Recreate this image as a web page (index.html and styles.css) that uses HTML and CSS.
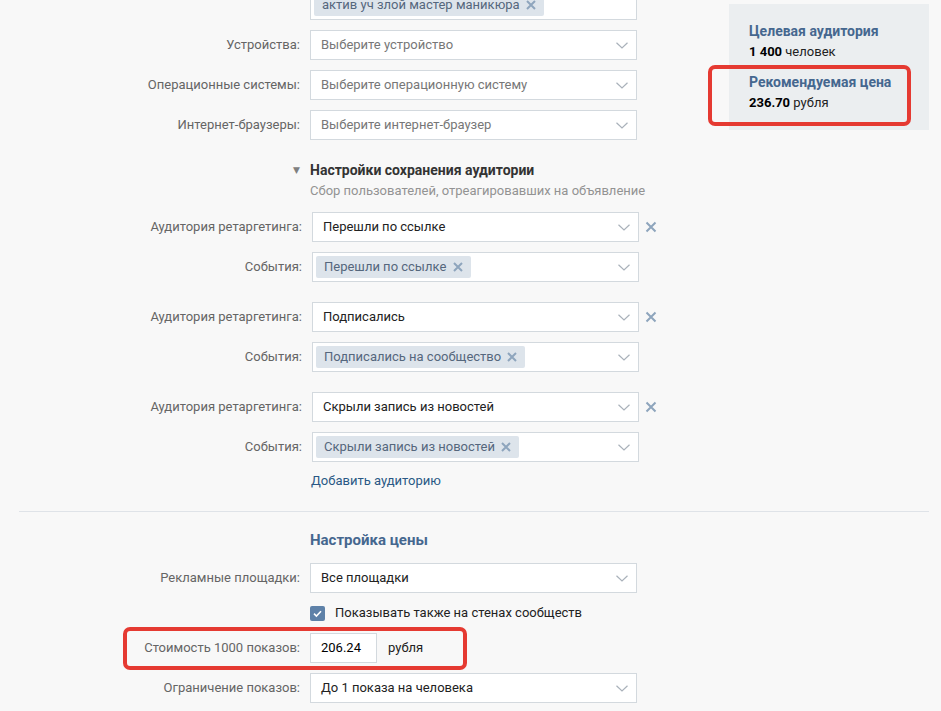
FILE: index.html
```html
<!DOCTYPE html>
<html lang="ru">
<head>
<meta charset="utf-8">
<title>Настройки</title>
<link rel="stylesheet" href="styles.css">
</head>
<body>
<div class="page">
  <div class="top">
    <div class="form">
      <div class="row">
        <div class="label"></div>
        <div class="select tags">
          <span class="tag">актив уч злой мастер маникюра <svg class="tag-x" viewBox="0 0 10 10"><path d="M1 1L9 9M9 1L1 9"/></svg></span>
        </div>
      </div>
      <div class="row">
        <div class="label">Устройства:</div>
        <div class="select"><span class="ph">Выберите устройство</span><svg class="chev" viewBox="0 0 12 7"><path d="M0.5 0.8L6 6L11.5 0.8"/></svg></div>
      </div>
      <div class="row">
        <div class="label">Операционные системы:</div>
        <div class="select"><span class="ph">Выберите операционную систему</span><svg class="chev" viewBox="0 0 12 7"><path d="M0.5 0.8L6 6L11.5 0.8"/></svg></div>
      </div>
      <div class="row">
        <div class="label">Интернет-браузеры:</div>
        <div class="select"><span class="ph">Выберите интернет-браузер</span><svg class="chev" viewBox="0 0 12 7"><path d="M0.5 0.8L6 6L11.5 0.8"/></svg></div>
      </div>

      <div class="sec-head"><span class="tri">▼</span>Настройки сохранения аудитории</div>
      <div class="sec-sub">Сбор пользователей, отреагировавших на объявление</div>

      <div class="group">
        <div class="row">
          <div class="label">Аудитория ретаргетинга:</div>
          <div class="select"><span class="val">Перешли по ссылке</span><svg class="chev" viewBox="0 0 12 7"><path d="M0.5 0.8L6 6L11.5 0.8"/></svg></div>
          <svg class="remove" viewBox="0 0 12 12"><path d="M1.5 1.5L10.5 10.5M10.5 1.5L1.5 10.5"/></svg>
        </div>
        <div class="row">
          <div class="label">События:</div>
          <div class="select tags"><span class="tag">Перешли по ссылке <svg class="tag-x" viewBox="0 0 10 10"><path d="M1 1L9 9M9 1L1 9"/></svg></span><svg class="chev" viewBox="0 0 12 7"><path d="M0.5 0.8L6 6L11.5 0.8"/></svg></div>
        </div>
      </div>

      <div class="group">
        <div class="row">
          <div class="label">Аудитория ретаргетинга:</div>
          <div class="select"><span class="val">Подписались</span><svg class="chev" viewBox="0 0 12 7"><path d="M0.5 0.8L6 6L11.5 0.8"/></svg></div>
          <svg class="remove" viewBox="0 0 12 12"><path d="M1.5 1.5L10.5 10.5M10.5 1.5L1.5 10.5"/></svg>
        </div>
        <div class="row">
          <div class="label">События:</div>
          <div class="select tags"><span class="tag">Подписались на сообщество <svg class="tag-x" viewBox="0 0 10 10"><path d="M1 1L9 9M9 1L1 9"/></svg></span><svg class="chev" viewBox="0 0 12 7"><path d="M0.5 0.8L6 6L11.5 0.8"/></svg></div>
        </div>
      </div>

      <div class="group last">
        <div class="row">
          <div class="label">Аудитория ретаргетинга:</div>
          <div class="select"><span class="val">Скрыли запись из новостей</span><svg class="chev" viewBox="0 0 12 7"><path d="M0.5 0.8L6 6L11.5 0.8"/></svg></div>
          <svg class="remove" viewBox="0 0 12 12"><path d="M1.5 1.5L10.5 10.5M10.5 1.5L1.5 10.5"/></svg>
        </div>
        <div class="row">
          <div class="label">События:</div>
          <div class="select tags"><span class="tag">Скрыли запись из новостей <svg class="tag-x" viewBox="0 0 10 10"><path d="M1 1L9 9M9 1L1 9"/></svg></span><svg class="chev" viewBox="0 0 12 7"><path d="M0.5 0.8L6 6L11.5 0.8"/></svg></div>
        </div>
      </div>

      <a class="add-link" href="#">Добавить аудиторию</a>
    </div>

    <div class="aside">
      <div class="stat">
        <div class="stat-title">Целевая аудитория</div>
        <div class="stat-val"><b>1 400</b> человек</div>
      </div>
      <div class="stat highlighted">
        <div class="stat-title">Рекомендуемая цена</div>
        <div class="stat-val"><b>236.70</b> рубля</div>
        <div class="mark mark-aside"></div>
      </div>
    </div>
  </div>

  <div class="divider"></div>

  <div class="price">
    <div class="price-title">Настройка цены</div>
    <div class="row">
      <div class="label">Рекламные площадки:</div>
      <div class="select"><span class="val">Все площадки</span><svg class="chev" viewBox="0 0 12 7"><path d="M0.5 0.8L6 6L11.5 0.8"/></svg></div>
    </div>
    <div class="row check-row">
      <span class="checkbox"><svg viewBox="0 0 15 15"><path d="M4 7.6L6.4 10L11 5.2"/></svg></span>
      <span class="check-text">Показывать также на стенах сообществ</span>
    </div>
    <div class="row cost-row">
      <div class="label">Стоимость 1000 показов:</div>
      <div class="input">206.24</div>
      <span class="unit">рубля</span>
      <div class="mark mark-cost"></div>
    </div>
    <div class="row">
      <div class="label">Ограничение показов:</div>
      <div class="select"><span class="val">До 1 показа на человека</span><svg class="chev" viewBox="0 0 12 7"><path d="M0.5 0.8L6 6L11.5 0.8"/></svg></div>
    </div>
  </div>
</div>
</body>
</html>
```
FILE: styles.css
```css
html, body {
  margin: 0;
  padding: 0;
}
body {
  background: #f8f8f8;
  font-family: Roboto, "Open Sans", "Liberation Sans", sans-serif;
  font-size: 13px;
  line-height: 18px;
  color: #222;
  overflow: hidden;
  height: 711px;
}
.page {
  margin-left: 19px;
  width: 910px;
}
.top {
  display: flex;
  justify-content: space-between;
  align-items: flex-start;
}
.form {
  margin-top: -10px;
  width: 660px;
}
.row {
  display: flex;
  align-items: center;
  margin-bottom: 10px;
  position: relative;
}
.label {
  width: 281px;
  margin-right: 10px;
  text-align: right;
  color: #656565;
  flex: none;
}
.select {
  width: 327px;
  height: 30px;
  box-sizing: border-box;
  border: 1px solid #d3d9de;
  background: #fff;
  display: flex;
  align-items: center;
  padding: 0 8px 0 10px;
  flex: none;
}
.select .ph {
  color: #777;
  flex: 1;
}
.select .val {
  color: #222;
  flex: 1;
}
.select.tags {
  padding-left: 3px;
}
.select.tags .tag {
  margin-right: auto;
}
.chev {
  width: 12px;
  height: 7px;
  flex: none;
  margin-left: auto;
}
.chev path {
  fill: none;
  stroke: #a9b1ba;
  stroke-width: 1.2;
}
.tag {
  display: inline-flex;
  align-items: center;
  height: 22px;
  padding: 0 8px;
  background: #dde4eb;
  border-radius: 2px;
  color: #55677d;
  white-space: pre;
}
.tag-x {
  width: 10px;
  height: 10px;
  margin-left: 3px;
}
.tag-x path, .remove path {
  fill: none;
  stroke: #8ea5bd;
  stroke-width: 2;
}
.remove {
  width: 12px;
  height: 12px;
  margin-left: 6px;
  flex: none;
}
.sec-head {
  display: flex;
  align-items: center;
  margin-top: 21px;
  margin-left: 274px;
  font-size: 14px;
  font-weight: bold;
  color: #333;
}
.tri {
  width: 17px;
  font-size: 9px;
  color: #7f7f7f;
  font-family: "DejaVu Sans", sans-serif;
}
.sec-sub {
  margin-left: 291px;
  margin-top: 3px;
  margin-bottom: 12px;
  color: #939393;
}
.group {
  padding-left: 2px;
  padding-bottom: 10px;
}
.group.last {
  padding-bottom: 0;
}
.add-link {
  display: block;
  margin-left: 292px;
  color: #2a5885;
  text-decoration: none;
}
.aside {
  width: 200px;
  margin-top: 4px;
  background: #ebeef0;
  box-sizing: border-box;
  padding: 18px 20px;
}
.stat {
  position: relative;
}
.stat + .stat {
  margin-top: 12px;
}
.stat-title {
  font-size: 14px;
  font-weight: bold;
  color: #45678f;
}
.stat-val {
  margin-top: 3px;
  color: #222;
}
.stat-val b {
  color: #000;
}
.mark {
  position: absolute;
  border: 4px solid #e53a32;
  border-radius: 7px;
  box-sizing: border-box;
  pointer-events: none;
}
.mark-aside {
  left: -41px;
  top: -8px;
  width: 203px;
  height: 61px;
}
.divider {
  height: 1px;
  background: #dfe3e8;
  margin-top: 21px;
}
.price-title {
  margin-top: 18px;
  margin-left: 291px;
  margin-bottom: 13px;
  font-size: 15px;
  line-height: 20px;
  font-weight: bold;
  color: #45678f;
}
.check-row {
  padding-left: 291px;
  height: 20px;
}
.checkbox {
  width: 15px;
  height: 15px;
  border-radius: 2px;
  background: #5e81a8;
  display: inline-flex;
  flex: none;
}
.checkbox svg {
  width: 15px;
  height: 15px;
}
.checkbox path {
  fill: none;
  stroke: #fff;
  stroke-width: 1.6;
}
.check-text {
  margin-left: 10px;
  color: #222;
}
.input {
  width: 67px;
  height: 30px;
  box-sizing: border-box;
  border: 1px solid #d3d9de;
  background: #fff;
  padding: 0 10px;
  display: flex;
  align-items: center;
  color: #000;
  flex: none;
}
.unit {
  margin-left: 11px;
  color: #222;
}
.mark-cost {
  left: 104px;
  top: -6px;
  width: 344px;
  height: 43px;
}
```
